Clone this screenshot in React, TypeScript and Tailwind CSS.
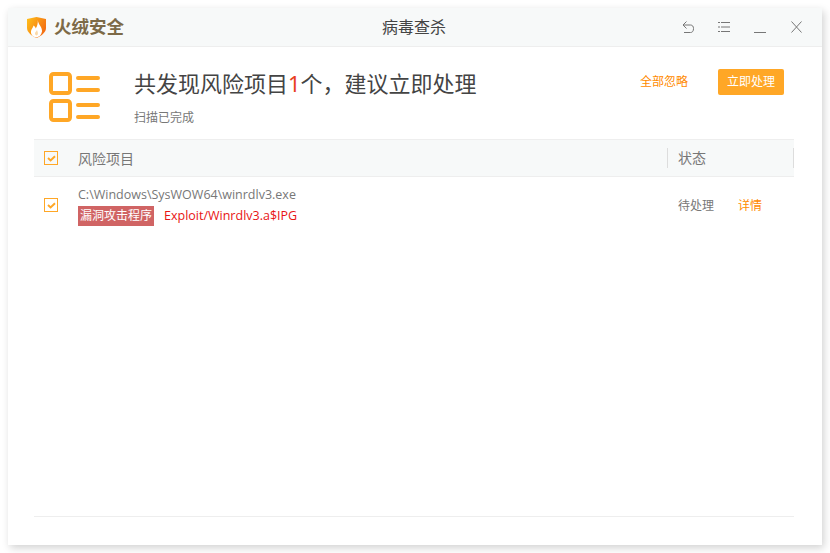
const font = { fontFamily: '"Noto Sans", "Noto Sans CJK SC", sans-serif' };
const latin = { fontFamily: '"Open Sans", "Noto Sans CJK SC", sans-serif' };

function CheckBox() {
  return (
    <div className="w-[14px] h-[14px] border border-[#ffa726] flex items-center justify-center">
      <svg width="9" height="7" viewBox="0 0 9 7" fill="none">
        <path d="M1 3 L3.6 5.4 L8 1.2" stroke="#ffa726" strokeWidth="2" />
      </svg>
    </div>
  );
}

function Logo() {
  return (
    <svg width="19" height="21" viewBox="0 0 19 21">
      <defs>
        <linearGradient id="shield" x1="0" y1="0" x2="1" y2="0.6">
          <stop offset="0" stopColor="#ffc21a" />
          <stop offset="1" stopColor="#f36c12" />
        </linearGradient>
      </defs>
      <path d="M0 2 L9.5 0 L19 2 V11 C19 15.5 14 19 9.5 21 C5 19 0 15.5 0 11 Z" fill="url(#shield)" />
      <path d="M10.8 3 C11 7.5 15.5 10 15 14.5 C14.5 18 12 20 9.5 20.5 C6 20 3.5 17.5 4 14 C4.5 11.5 6 11 6.5 8.5 C8 9.5 8.6 10.5 8.7 11.5 C10.2 9.5 11 6.5 10.8 3 Z" fill="#fff" />
      <path d="M10 13 C10.5 15 11.5 16 10.5 18 C9.5 19 8 18 8 16.5 C8 15 9.5 14.5 10 13 Z" fill="#fbd9a8" />
    </svg>
  );
}

function ListIcon() {
  return (
    <svg width="52" height="50" viewBox="0 0 52 50" fill="none">
      <rect x="2" y="2" width="19" height="19" rx="2.5" stroke="#ffa726" strokeWidth="4" />
      <rect x="2" y="29" width="19" height="19" rx="2.5" stroke="#ffa726" strokeWidth="4" />
      <path d="M29 6 H49 M29 18 H49 M29 33 H49 M29 45 H49" stroke="#ffa726" strokeWidth="4" strokeLinecap="round" />
    </svg>
  );
}

function WindowButtons() {
  return (
    <div className="flex items-center">
      <svg width="12" height="12" viewBox="0 0 12 12" fill="none" stroke="#777" strokeWidth="1">
        <path d="M4.5 0.5 L1 4 L4.5 7.5 M1 4 H8.5 C10.5 4 11.5 5.5 11.5 7.5 C11.5 10 10.5 11.5 8.5 11.5 H2" />
      </svg>
      <svg className="ml-[24px]" width="12" height="12" viewBox="0 0 12 12" fill="none" stroke="#777" strokeWidth="1">
        <path d="M0 1.5 H2 M3 1.5 H12 M0 6 H2 M3 6 H12 M0 10.5 H2 M3 10.5 H12" />
      </svg>
      <svg className="ml-[24px]" width="12" height="12" viewBox="0 0 12 12" fill="none" stroke="#777" strokeWidth="1">
        <path d="M0 11.5 H12" />
      </svg>
      <svg className="ml-[25px]" width="11" height="12" viewBox="0 0 11 12" fill="none" stroke="#777" strokeWidth="1">
        <path d="M0.5 0.5 L10.5 11.5 M10.5 0.5 L0.5 11.5" />
      </svg>
    </div>
  );
}

export default function App() {
  return (
    <div className="w-[830px] h-[553px] bg-white pt-[8px] pl-[8px] pr-[8px] pb-[8px]" style={font}>
      {/* Window */}
      <div className="w-[814px] h-[537px] bg-white flex flex-col shadow-[2px_3px_8px_rgba(0,0,0,0.18)]">
        {/* Title bar */}
        <header className="h-[39px] shrink-0 bg-[#f7f9f9] border-b border-[#eeeeee] flex items-center justify-between pl-[19px] pr-[20px] relative">
          <div className="flex items-center gap-[8px]">
            <Logo />
            <span className="text-[17.5px] font-bold text-[#7d6a47] leading-none">火绒安全</span>
          </div>
          <span className="absolute left-[374px] top-[8px] text-[16px] leading-[22px] text-[#444]">病毒查杀</span>
          <WindowButtons />
        </header>

        {/* Summary */}
        <section className="h-[92px] shrink-0 flex pl-[41px] pr-[38px] pt-[25px]">
          <ListIcon />
          <div className="ml-[33px] flex-1">
            <h1 className="text-[22px] leading-[26px] text-[#444] -mt-[2px]">
              共发现风险项目<span className="text-[#e8401c]">1</span>个，建议立即处理
            </h1>
            <p className="text-[12px] leading-[16px] text-[#777] mt-[14px]">扫描已完成</p>
          </div>
          <div className="flex items-start -mt-[3px]">
            <span className="text-[12px] leading-[26px] text-[#ff8a00] mr-[30px]">全部忽略</span>
            <button className="w-[66px] h-[26px] rounded-[2px] bg-[#ffa726] text-white text-[12px] leading-[26px]">
              立即处理
            </button>
          </div>
        </section>

        {/* Table */}
        <div className="ml-[26px] mr-[28px] flex-1 flex flex-col">
          <div className="h-[38px] shrink-0 bg-[#f7f9f9] border-y border-[#eeeeee] flex items-center text-[14px] text-[#777]">
            <div className="ml-[10px]"><CheckBox /></div>
            <span className="ml-[20px] flex-1">风险项目</span>
            <div className="w-[127px] h-[20px] border-x border-[#dddddd] pl-[10px] leading-[20px]">状态</div>
          </div>
          <div className="flex items-center h-[56px] shrink-0">
            <div className="ml-[10px]"><CheckBox /></div>
            <div className="ml-[20px] flex-1 pt-[3px]">
              <div className="text-[12.5px] leading-[16px] text-[#777]" style={latin}>C:\Windows\SysWOW64\winrdlv3.exe</div>
              <div className="flex items-center mt-[3px]">
                <span className="h-[20px] w-[76px] bg-[#d06464] text-white text-[12px] leading-[20px] text-center">漏洞攻击程序</span>
                <span className="ml-[10px] text-[12.5px] text-[#e81414]" style={latin}>Exploit/Winrdlv3.a$IPG</span>
              </div>
            </div>
            <div className="w-[116px] flex text-[12px] pt-[1px]">
              <span className="text-[#777]">待处理</span>
              <span className="ml-[24px] text-[#ff8a00]">详情</span>
            </div>
          </div>
          <div className="flex-1" />
          <div className="h-[29px] shrink-0 border-t border-[#eeeeee]" />
        </div>
      </div>
    </div>
  );
}
